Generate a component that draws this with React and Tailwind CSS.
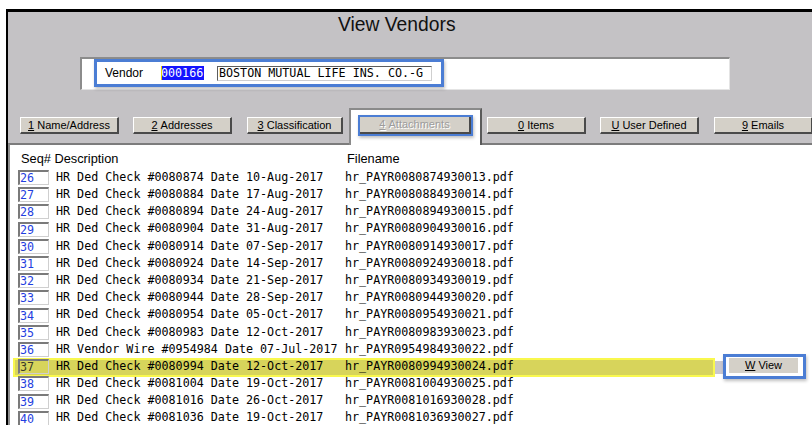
import React from "react";

const sans = "font-['Liberation_Sans',Arial,sans-serif]";
const mono = "font-['DejaVu_Sans_Mono','Liberation_Mono',monospace]";

const rows = [
  ["26", "HR Ded Check #0080874 Date 10-Aug-2017", "hr_PAYR0080874930013.pdf"],
  ["27", "HR Ded Check #0080884 Date 17-Aug-2017", "hr_PAYR0080884930014.pdf"],
  ["28", "HR Ded Check #0080894 Date 24-Aug-2017", "hr_PAYR0080894930015.pdf"],
  ["29", "HR Ded Check #0080904 Date 31-Aug-2017", "hr_PAYR0080904930016.pdf"],
  ["30", "HR Ded Check #0080914 Date 07-Sep-2017", "hr_PAYR0080914930017.pdf"],
  ["31", "HR Ded Check #0080924 Date 14-Sep-2017", "hr_PAYR0080924930018.pdf"],
  ["32", "HR Ded Check #0080934 Date 21-Sep-2017", "hr_PAYR0080934930019.pdf"],
  ["33", "HR Ded Check #0080944 Date 28-Sep-2017", "hr_PAYR0080944930020.pdf"],
  ["34", "HR Ded Check #0080954 Date 05-Oct-2017", "hr_PAYR0080954930021.pdf"],
  ["35", "HR Ded Check #0080983 Date 12-Oct-2017", "hr_PAYR0080983930023.pdf"],
  ["36", "HR Vendor Wire #0954984 Date 07-Jul-2017", "hr_PAYR0954984930022.pdf"],
  ["37", "HR Ded Check #0080994 Date 12-Oct-2017", "hr_PAYR0080994930024.pdf"],
  ["38", "HR Ded Check #0081004 Date 19-Oct-2017", "hr_PAYR0081004930025.pdf"],
  ["39", "HR Ded Check #0081016 Date 26-Oct-2017", "hr_PAYR0081016930028.pdf"],
  ["40", "HR Ded Check #0081036 Date 19-Oct-2017", "hr_PAYR0081036930027.pdf"],
];

function Btn({ k, label, w, className = "" }) {
  return (
    <div
      className={`${w} h-[17px] mt-[9px] shrink-0 bg-[#d4d0c8] border-t border-l border-white border-r-2 border-b-2 border-r-[#4a4a4a] border-b-[#4a4a4a] flex items-center justify-center text-[11px] leading-none text-black ${sans} ${className}`}
    >
      <span className="underline">{k}</span>
      <span>&nbsp;{label}</span>
    </div>
  );
}

export default function App() {
  return (
    <div className="w-[812px] h-[425px] overflow-hidden bg-white pl-[6px] pt-[9px]">
      <div className="w-[900px] h-[480px] border-t-[3px] border-l-2 border-black bg-[#c4c2c5] flex flex-col">
        {/* window title */}
        <div className={`pt-[2px] pl-[330px] h-[24px] text-[19.3px] leading-[22px] text-[#111] ${sans}`}>
          View Vendors
        </div>

        {/* vendor header field */}
        <div className="ml-[72px] mt-[21px] w-[650px] h-[33px] bg-white border-t-2 border-l-2 border-[#8c8c8c] border-r border-b border-r-[#e4e4e4] border-b-[#e4e4e4] pl-[12px] shrink-0">
          <div className="w-[350px] h-[28px] border-[3px] border-[#4b7dd4] shadow-[1px_2px_3px_rgba(0,0,0,0.25)] bg-white flex items-center pl-[8px]">
            <span className={`w-[56px] text-[12px] text-black ${sans}`}>Vendor</span>
            <span className={`relative h-[14px] w-[43px] bg-[#1414ff] text-white text-[11.7px] leading-[14px] ${mono}`}>
              <span className="absolute left-0 top-0 h-[14px] w-[1px] bg-[#e8d000]" />
              000166
            </span>
            <span
              className={`ml-[13px] h-[15px] w-[215px] border-t border-l border-[#5c5c5c] border-r border-b border-r-[#cfcfcf] border-b-[#cfcfcf] pl-[1px] text-[11.7px] leading-[13px] text-black whitespace-pre ${mono}`}
            >
              BOSTON MUTUAL LIFE INS. CO.-G
            </span>
          </div>
        </div>

        {/* tab buttons */}
        <div className="mt-[18px] h-[35px] flex items-start shrink-0">
          <Btn k="1" label="Name/Address" w="w-[99px]" className="ml-[12px]" />
          <Btn k="2" label="Addresses" w="w-[99px]" className="ml-[14px]" />
          <Btn k="3" label="Classification" w="w-[96px]" className="ml-[15px]" />
          <div className="ml-[6px] w-[133px] h-[37px] relative z-10 bg-white border-t-2 border-l-2 border-[#8a8a8a] border-r-2 border-r-[#5a5a5a] shrink-0">
            <div className="ml-[7px] mt-[5px] w-[115px] h-[21px] border-2 border-[#4b7dd4] shadow-[1px_2px_3px_rgba(0,0,0,0.25)]">
              <div
                className={`w-full h-full bg-[#d4d0c8] border-r-2 border-b-2 border-[#4a4a4a] flex items-center justify-center text-[11px] leading-none text-[#9c9c9c] [text-shadow:1px_1px_0_#ffffff] ${sans}`}
              >
                <span className="underline">4</span>
                <span>&nbsp;Attachments</span>
              </div>
            </div>
          </div>
          <Btn k="0" label="Items" w="w-[99px]" className="ml-[5px]" />
          <Btn k="U" label="User Defined" w="w-[99px]" className="ml-[14px]" />
          <Btn k="9" label="Emails" w="w-[99px]" className="ml-[15px]" />
        </div>

        {/* attachment list */}
        <div className="flex-1 bg-white border-t-2 border-[#7c7c7c] border-l-2 border-l-[#8e8e8e] pt-[6px]">
          <div className={`h-[16px] leading-[16px] text-[12.8px] text-black flex mb-[2px] ${sans}`}>
            <span className="ml-[11px] w-[326px]">Seq# Description</span>
            <span>Filename</span>
          </div>

          {rows.map(([seq, desc, file]) => {
            const hot = seq === "37";
            return (
              <div key={seq} className={`relative flex items-center h-[17.2px] text-[11.7px] ${mono}`}>
                {hot && (
                  <>
                    <div className="absolute left-[3px] top-0 w-[702px] h-[19px] bg-[#d7d45b] border-2 border-[#f9f84e]" />
                    <div className="absolute left-[705px] top-[3px] w-[8px] h-[13px] bg-[#c9c7cf]" />
                    <div className="absolute left-[713px] top-[-4px] w-[83px] h-[25px] border-[3px] border-[#4b7dd4] shadow-[1px_2px_3px_rgba(0,0,0,0.25)] pl-[2px] bg-white">
                      <div
                        className={`w-[72px] h-[18px] bg-[#d4d0c8] border-t border-l border-white border-r-2 border-b-2 border-[#4a4a4a] border-t-white border-l-white flex items-center justify-center text-[11px] leading-none text-black ${sans}`}
                      >
                        <span className="underline">W</span>
                        <span>&nbsp;View</span>
                      </div>
                    </div>
                  </>
                )}
                <div
                  className={`relative ml-[8px] w-[31px] h-[15px] border-t-2 border-l-2 border-[#7a7a7a] border-r border-b border-r-[#cfcfcf] border-b-[#cfcfcf] leading-[13px] ${
                    hot ? "text-[#3a3a2a]" : "text-[#1f3fe0]"
                  }`}
                >
                  {seq}
                </div>
                <span className="relative ml-[7px] w-[289px] whitespace-pre text-black">{desc}</span>
                <span className="relative whitespace-pre text-black">{file}</span>
              </div>
            );
          })}
        </div>
      </div>
    </div>
  );
}
